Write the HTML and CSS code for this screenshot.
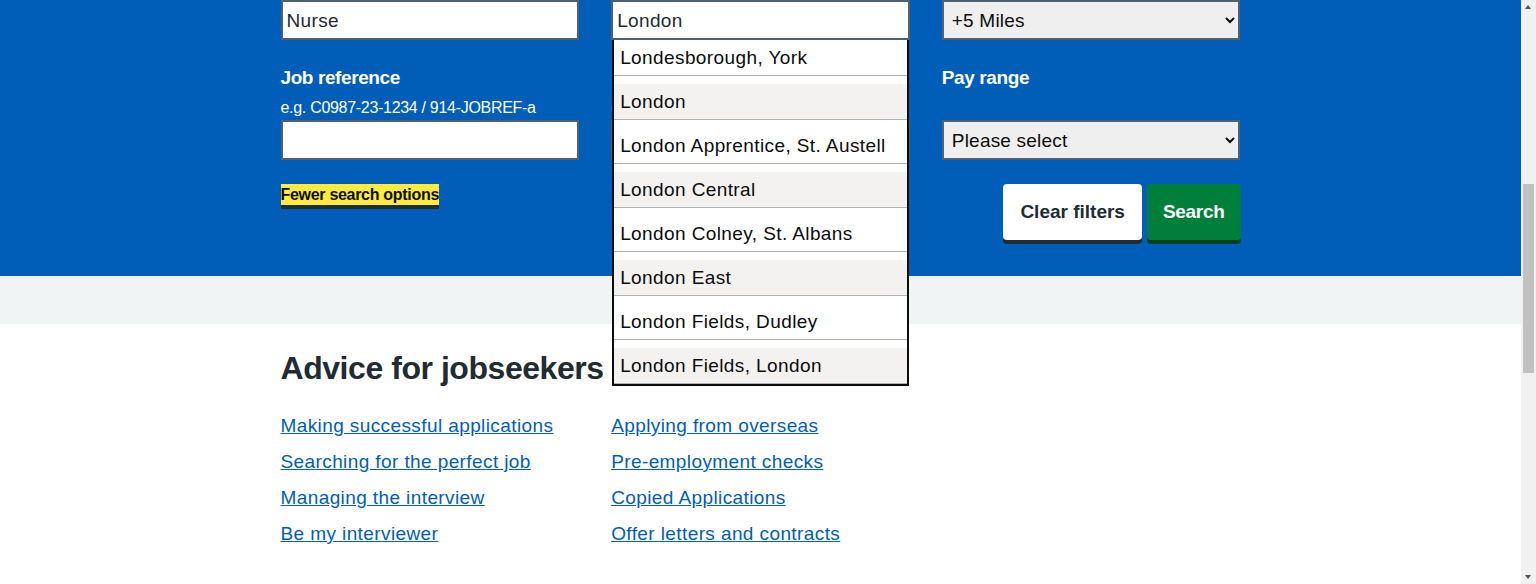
FILE: index.html
```html
<!DOCTYPE html>
<html lang="en">
<head>
<meta charset="utf-8">
<title>Search for jobs in the NHS - NHS Jobs</title>
<link rel="stylesheet" href="styles.css">
</head>
<body>
<div class="cookie-banner">
  <div class="container">
    <h2 class="cookie-title">Cookies on the NHS Jobs website</h2>
    <p class="cookie-text">We've put some small files called cookies on your device to make our site work.</p>
    <div class="cookie-actions">
      <button type="button" class="btn btn--primary">I'm OK with analytics cookies</button>
      <button type="button" class="btn btn--primary">Do not use analytics cookies</button>
    </div>
  </div>
</div>

<header class="site-header">
  <div class="container header-inner">
    <a class="logo" href="#">
      <svg class="logo-mark" width="100" height="40" viewBox="0 0 100 40" aria-hidden="true">
        <rect width="100" height="40" fill="#fff"></rect>
        <text x="50" y="31" text-anchor="middle" fill="#005eb8" font-family="Liberation Sans, Arial, sans-serif" font-size="30" font-weight="700" font-style="italic">NHS</text>
      </svg>
      <span class="logo-service">Jobs</span>
    </a>
    <a class="header-link" href="#">Sign in</a>
  </div>
</header>

<main>
  <section class="search">
    <div class="container">
      <h1 class="search-title">Search for jobs in the NHS</h1>
      <p class="search-lead">Find a job in the NHS in England and Wales.</p>
      <form class="search-form" onsubmit="return false">
        <div class="field-grid">
          <div class="field">
            <label class="label" for="keyword">What</label>
            <input class="input js-scroll-anchor" id="keyword" type="text" value="Nurse">
          </div>
          <div class="field">
            <label class="label" for="location">Where</label>
            <div class="autocomplete">
              <input class="input" id="location" type="text" value="London">
              <ul class="autocomplete-menu">
                <li class="autocomplete-option">Londesborough, York</li>
                <li class="autocomplete-option">London</li>
                <li class="autocomplete-option">London Apprentice, St. Austell</li>
                <li class="autocomplete-option">London Central</li>
                <li class="autocomplete-option">London Colney, St. Albans</li>
                <li class="autocomplete-option">London East</li>
                <li class="autocomplete-option">London Fields, Dudley</li>
                <li class="autocomplete-option">London Fields, London</li>
              </ul>
            </div>
          </div>
          <div class="field">
            <label class="label" for="distance">Distance</label>
            <select class="select" id="distance">
              <option>+5 Miles</option>
              <option>+10 Miles</option>
              <option>+20 Miles</option>
            </select>
          </div>

          <div class="field">
            <label class="label" for="jobref">Job reference</label>
            <div class="hint">e.g. C0987-23-1234 / 914-JOBREF-a</div>
            <input class="input" id="jobref" type="text">
          </div>
          <div class="field">
            <label class="label" for="employer">Employer</label>
            <div class="hint">e.g. Leeds Teaching Hospitals</div>
            <input class="input" id="employer" type="text">
          </div>
          <div class="field">
            <label class="label" for="pay">Pay range</label>
            <select class="select select--end" id="pay">
              <option>Please select</option>
              <option>£0 to £10,000</option>
              <option>£10,000 to £20,000</option>
            </select>
          </div>
        </div>

        <div class="form-actions">
          <button type="button" class="toggle-link">Fewer search options</button>
          <div class="action-buttons">
            <button type="button" class="btn btn--reverse">Clear filters</button>
            <button type="submit" class="btn btn--primary btn--tight">Search</button>
          </div>
        </div>
      </form>
    </div>
  </section>

  <div class="band"></div>

  <section class="advice">
    <div class="container">
      <h2 class="advice-title">Advice for jobseekers</h2>
      <div class="advice-grid">
        <ul class="link-list">
          <li><a href="#">Making successful applications</a></li>
          <li><a href="#">Searching for the perfect job</a></li>
          <li><a href="#">Managing the interview</a></li>
          <li><a href="#">Be my interviewer</a></li>
        </ul>
        <ul class="link-list">
          <li><a href="#">Applying from overseas</a></li>
          <li><a href="#">Pre-employment checks</a></li>
          <li><a href="#">Copied Applications</a></li>
          <li><a href="#">Offer letters and contracts</a></li>
        </ul>
      </div>
    </div>
  </section>

  <section class="help">
    <div class="container">
      <h2 class="help-title">Get help with NHS Jobs</h2>
      <p class="help-text">Find answers to common questions about creating an account and applying for jobs.</p>
      <p class="help-text">If you cannot find what you need, contact the employer listed on the job advert.</p>
    </div>
  </section>
</main>

<footer class="site-footer">
  <div class="container">
    <ul class="footer-list">
      <li><a href="#">Accessibility statement</a></li>
      <li><a href="#">Contact us</a></li>
      <li><a href="#">Cookies</a></li>
      <li><a href="#">Privacy policy</a></li>
      <li><a href="#">Terms and conditions</a></li>
      <li><a href="#">Help and support</a></li>
      <li><a href="#">Employer sign in</a></li>
      <li><a href="#">Sitemap</a></li>
    </ul>
    <p class="footer-copy">© Crown copyright</p>
  </div>
</footer>

<div class="scrollbar" aria-hidden="true">
  <div class="scrollbar-btn scrollbar-btn--up"></div>
  <div class="scrollbar-track"><div class="scrollbar-thumb"></div></div>
  <div class="scrollbar-btn scrollbar-btn--down"></div>
</div>

<script src="script.js"></script>
</body>
</html>
```

FILE: styles.css
```css
*, *::before, *::after {
  box-sizing: border-box;
}

html {
  font-family: "Liberation Sans", Arial, sans-serif;
  color: #212b32;
}

body {
  margin: 0;
  padding-right: 15px;
  background: #ffffff;
  font-size: 19px;
  line-height: 28px;
}

.container {
  max-width: 960px;
  margin: 0 auto;
}

/* Cookie banner (above the fold) */
.cookie-banner {
  background: #ffffff;
  padding: 32px 0;
  border-bottom: 1px solid #d8dde0;
}

.cookie-title {
  margin: 0 0 16px;
  font-size: 24px;
  line-height: 32px;
  font-weight: 700;
}

.cookie-text {
  margin: 0 0 16px;
  font-size: 16px;
  line-height: 24px;
}

.cookie-actions {
  display: flex;
  gap: 16px;
}

/* Header */
.site-header {
  background: #005eb8;
}

.header-inner {
  display: flex;
  align-items: center;
  justify-content: space-between;
  height: 96px;
}

.logo {
  display: flex;
  align-items: center;
  gap: 12px;
  color: #ffffff;
  text-decoration: none;
}

.logo-mark {
  display: block;
}

.logo-service {
  font-size: 24px;
  font-weight: 700;
}

.header-link {
  color: #ffffff;
  font-size: 16px;
}

/* Search panel */
.search {
  background: #005eb8;
  color: #ffffff;
  padding: 40px 0 36px;
}

.search-title {
  margin: 0 0 24px;
  font-size: 48px;
  line-height: 56px;
  font-weight: 700;
}

.search-lead {
  margin: 0 0 36px;
}

.field-grid {
  display: grid;
  grid-template-columns: repeat(3, 1fr);
  column-gap: 32px;
  row-gap: 24px;
}

.field {
  display: flex;
  flex-direction: column;
  min-width: 0;
}

.label {
  display: block;
  margin-bottom: 4px;
  font-size: 19px;
  line-height: 28px;
  font-weight: 700;
  letter-spacing: -0.4px;
}

.hint {
  margin-bottom: 0;
  font-size: 16px;
  line-height: 24px;
  letter-spacing: -0.3px;
}

.input {
  display: block;
  width: 100%;
  height: 40px;
  margin: 0;
  padding: 5px 4px 3px;
  border: 2px solid #4c6272;
  border-radius: 0;
  background: #ffffff;
  color: #212b32;
  font-family: inherit;
  font-size: 19px;
  letter-spacing: 0.35px;
  outline: none;
}

.select {
  display: block;
  width: 100%;
  height: 40px;
  margin: 0;
  padding: 0 4px;
  border: 2px solid #4c6272;
  border-radius: 0;
  background-color: #efefef;
  color: #0b0c0c;
  font-family: inherit;
  font-size: 19px;
  letter-spacing: 0.2px;
}

.select--end {
  margin-top: auto;
}

/* Autocomplete */
.autocomplete {
  position: relative;
}

.autocomplete-menu {
  position: absolute;
  top: 100%;
  left: 1px;
  right: 1px;
  z-index: 10;
  height: 346px;
  margin: 0;
  padding: 0;
  list-style: none;
  overflow: hidden;
  background: #ffffff;
  border: 2px solid #0b0c0c;
  border-top: 0;
  color: #0b0c0c;
}

.autocomplete-option {
  display: block;
  height: 44px;
  padding: 0 6px;
  border-top: 8px solid #ffffff;
  border-bottom: 1px solid #b1b4b6;
  font-size: 19px;
  line-height: 35px;
  letter-spacing: 0.4px;
  white-space: nowrap;
}

.autocomplete-option:first-child {
  height: 36px;
  border-top-width: 0;
  line-height: 35px;
}

.autocomplete-option:nth-child(even) {
  background: #f3f2f1;
}

/* Actions */
.form-actions {
  display: flex;
  justify-content: space-between;
  align-items: flex-start;
  margin-top: 24px;
}

.toggle-link {
  margin: 0;
  padding: 0;
  border: 0;
  background: #ffeb3b;
  color: #0b0c0c;
  font-family: inherit;
  font-size: 16px;
  line-height: 21px;
  font-weight: 700;
  letter-spacing: -0.3px;
  box-shadow: 0 4px 0 #212b32;
  cursor: pointer;
}

.action-buttons {
  display: flex;
  gap: 5px;
}

.btn {
  margin: 0;
  padding: 12px 15px;
  border: 2px solid transparent;
  border-radius: 4px;
  font-family: inherit;
  font-size: 19px;
  line-height: 28px;
  font-weight: 700;
  cursor: pointer;
}

.btn--tight {
  padding: 12px 14px;
  letter-spacing: -0.3px;
}

.btn--primary {
  background: #007f3b;
  color: #ffffff;
  box-shadow: 0 4px 0 #00401e;
}

.btn--reverse {
  background: #ffffff;
  color: #212b32;
  box-shadow: 0 4px 0 #212b32;
}

/* Grey band */
.band {
  height: 48px;
  background: #f0f4f5;
}

/* Advice */
.advice {
  padding: 24px 0 40px;
}

.advice-title {
  margin: 0 0 24px;
  font-size: 32px;
  line-height: 40px;
  font-weight: 700;
  letter-spacing: -0.45px;
  color: #212b32;
}

.advice-grid {
  display: grid;
  grid-template-columns: repeat(3, 1fr);
  column-gap: 32px;
}

.link-list {
  margin: 0;
  padding: 0;
  list-style: none;
}

.link-list li {
  margin-bottom: 8px;
  line-height: 28px;
}

.link-list a {
  color: #005eb8;
  text-decoration: underline;
  letter-spacing: 0.4px;
}

/* Help */
.help {
  padding: 0 0 48px;
}

.help-title {
  margin: 0 0 16px;
  font-size: 24px;
  line-height: 32px;
}

.help-text {
  margin: 0 0 16px;
}

/* Footer */
.site-footer {
  background: #f0f4f5;
  border-top: 4px solid #005eb8;
  padding: 32px 0 48px;
}

.footer-list {
  margin: 0;
  padding: 0;
  list-style: none;
}

.footer-list li {
  margin-bottom: 12px;
  font-size: 16px;
  line-height: 24px;
}

.footer-list a {
  color: #005eb8;
}

.footer-copy {
  margin: 24px 0 0;
  font-size: 16px;
  line-height: 24px;
  color: #4c6272;
}

/* Window scrollbar (drawn over the page edge) */
.scrollbar {
  position: fixed;
  top: 0;
  right: 0;
  bottom: 0;
  z-index: 100;
  width: 15px;
  display: flex;
  flex-direction: column;
  background: #f1f1f1;
}

.scrollbar-btn {
  position: relative;
  height: 15px;
  flex: none;
}

.scrollbar-btn::before {
  content: "";
  position: absolute;
  left: 4px;
  border-left: 3.5px solid transparent;
  border-right: 3.5px solid transparent;
}

.scrollbar-btn--up::before {
  top: 5px;
  border-bottom: 4px solid #505050;
}

.scrollbar-btn--down::before {
  top: 6px;
  border-top: 4px solid #505050;
}

.scrollbar-track {
  position: relative;
  flex: 1;
}

.scrollbar-thumb {
  position: absolute;
  top: 169px;
  left: 2px;
  right: 2px;
  height: 189px;
  background: #c1c1c1;
}
```

FILE: script.js
```js
(function () {
  if ('scrollRestoration' in history) {
    history.scrollRestoration = 'manual';
  }
  function place() {
    var anchor = document.querySelector('.js-scroll-anchor');
    if (!anchor) return;
    var y = anchor.getBoundingClientRect().top + window.pageYOffset;
    window.scrollTo(0, y);
  }
  place();
  window.addEventListener('load', place);
})();
```
